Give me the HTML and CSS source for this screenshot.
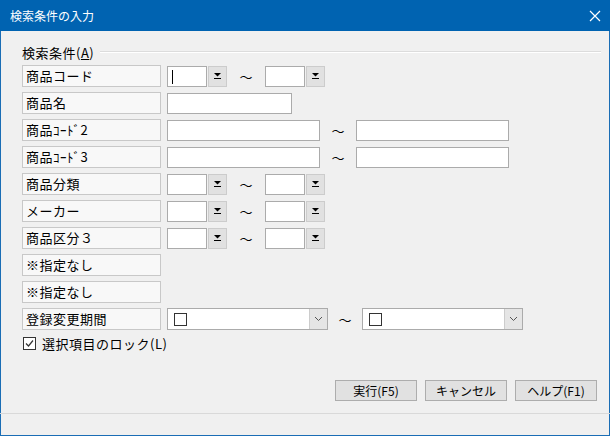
FILE: index.html
```html
<html>
<head>
  <meta charset="utf-8">
  <link rel="stylesheet" href="styles.css">
</head>
<body>
<div class="window">
  <div class="titleBar">
    <span class="titleText">検索条件の入力</span>
    <svg class="closeIcon" width="12" height="12" viewBox="0 0 12 12"><path d="M1 1L11 11M11 1L1 11" stroke="#fff" stroke-width="1.2" fill="none"/></svg>
  </div>

  <div class="client">
    <div class="groupHead">
      <span class="groupText">検索条件(<u>A</u>)</span>
      <span class="groupLine"></span>
    </div>

    <div class="rows">
      <div class="row">
        <div class="fieldLabel">商品コード</div>
        <div class="codeBox"><span class="caret"></span></div>
        <div class="dropBtn"><svg width="9" height="8" viewBox="0 0 9 8"><path d="M1 1H8L4.5 4.5Z" fill="#000"/><path d="M1 6.5H8" stroke="#000" stroke-width="1"/></svg></div>
        <span class="tilde">～</span>
        <div class="codeBox"></div>
        <div class="dropBtn"><svg width="9" height="8" viewBox="0 0 9 8"><path d="M1 1H8L4.5 4.5Z" fill="#000"/><path d="M1 6.5H8" stroke="#000" stroke-width="1"/></svg></div>
      </div>

      <div class="row">
        <div class="fieldLabel">商品名</div>
        <div class="textBox nameBox"></div>
      </div>

      <div class="row">
        <div class="fieldLabel">商品ｺｰﾄﾞ2</div>
        <div class="textBox wideBox"></div>
        <span class="tilde wideTilde">～</span>
        <div class="textBox wideBox"></div>
      </div>

      <div class="row">
        <div class="fieldLabel">商品ｺｰﾄﾞ3</div>
        <div class="textBox wideBox"></div>
        <span class="tilde wideTilde">～</span>
        <div class="textBox wideBox"></div>
      </div>

      <div class="row">
        <div class="fieldLabel">商品分類</div>
        <div class="codeBox"></div>
        <div class="dropBtn"><svg width="9" height="8" viewBox="0 0 9 8"><path d="M1 1H8L4.5 4.5Z" fill="#000"/><path d="M1 6.5H8" stroke="#000" stroke-width="1"/></svg></div>
        <span class="tilde">～</span>
        <div class="codeBox"></div>
        <div class="dropBtn"><svg width="9" height="8" viewBox="0 0 9 8"><path d="M1 1H8L4.5 4.5Z" fill="#000"/><path d="M1 6.5H8" stroke="#000" stroke-width="1"/></svg></div>
      </div>

      <div class="row">
        <div class="fieldLabel">メーカー</div>
        <div class="codeBox"></div>
        <div class="dropBtn"><svg width="9" height="8" viewBox="0 0 9 8"><path d="M1 1H8L4.5 4.5Z" fill="#000"/><path d="M1 6.5H8" stroke="#000" stroke-width="1"/></svg></div>
        <span class="tilde">～</span>
        <div class="codeBox"></div>
        <div class="dropBtn"><svg width="9" height="8" viewBox="0 0 9 8"><path d="M1 1H8L4.5 4.5Z" fill="#000"/><path d="M1 6.5H8" stroke="#000" stroke-width="1"/></svg></div>
      </div>

      <div class="row">
        <div class="fieldLabel">商品区分３</div>
        <div class="codeBox"></div>
        <div class="dropBtn"><svg width="9" height="8" viewBox="0 0 9 8"><path d="M1 1H8L4.5 4.5Z" fill="#000"/><path d="M1 6.5H8" stroke="#000" stroke-width="1"/></svg></div>
        <span class="tilde">～</span>
        <div class="codeBox"></div>
        <div class="dropBtn"><svg width="9" height="8" viewBox="0 0 9 8"><path d="M1 1H8L4.5 4.5Z" fill="#000"/><path d="M1 6.5H8" stroke="#000" stroke-width="1"/></svg></div>
      </div>

      <div class="row">
        <div class="fieldLabel">※指定なし</div>
      </div>

      <div class="row">
        <div class="fieldLabel">※指定なし</div>
      </div>

      <div class="row">
        <div class="fieldLabel">登録変更期間</div>
        <div class="dateBox">
          <span class="dateCheck"></span>
          <span class="dateBtn"><svg width="9" height="6" viewBox="0 0 9 6"><path d="M1 1L4.5 4.5L8 1" stroke="#555" stroke-width="1" fill="none"/></svg></span>
        </div>
        <span class="tilde dateTilde">～</span>
        <div class="dateBox">
          <span class="dateCheck"></span>
          <span class="dateBtn"><svg width="9" height="6" viewBox="0 0 9 6"><path d="M1 1L4.5 4.5L8 1" stroke="#555" stroke-width="1" fill="none"/></svg></span>
        </div>
      </div>
    </div>

    <div class="lockRow">
      <span class="checkBox"><svg width="11" height="11" viewBox="0 0 11 11"><path d="M2 5.5L4.5 8L9 2.5" stroke="#333" stroke-width="1.2" fill="none"/></svg></span>
      <span class="lockText">選択項目のロック(L)</span>
    </div>

    <div class="buttonRow">
      <div class="cmdButton">実行(F5)</div>
      <div class="cmdButton">キャンセル</div>
      <div class="cmdButton">ヘルプ(F1)</div>
    </div>
  </div>

  <div class="statusArea"></div>
</div>
</body>
</html>
```

FILE: styles.css
```css
body {margin:0;background:#F0F0F0;font-family:"Noto Sans CJK JP","Noto Sans",sans-serif;}

.window {width:610px;height:436px;box-sizing:border-box;border:1px solid #1A6DB5;border-top:none;background:#F0F0F0;display:flex;flex-direction:column;}

.titleBar {height:31px;background:#0063B1;margin:0 -1px;display:flex;align-items:center;justify-content:space-between;padding:0 9px 0 10px;}
.titleText {color:#fff;font-size:12px;}

.client {flex:1;padding:12px 0 0 21px;}

.groupHead {display:flex;align-items:center;height:18px;}
.groupText {font-size:13px;color:#000;padding-right:6px;letter-spacing:0.5px;}
.groupLine {flex:1;height:0;border-top:1px solid #DCDCDC;border-bottom:1px solid #FFFFFF;margin-right:8px;}

.rows {display:flex;flex-direction:column;gap:5px;margin-top:4px;}
.row {display:flex;align-items:center;height:22px;}

.fieldLabel {width:139px;height:22px;box-sizing:border-box;border:1px solid #C8C8C8;background:#F8F8F8;font-size:13px;line-height:20px;padding-left:3px;color:#000;margin-right:6px;letter-spacing:0.5px;}

.codeBox {width:40px;height:21px;box-sizing:border-box;border:1px solid #ABABAB;background:#fff;position:relative;}
.caret {position:absolute;left:4px;top:3px;width:1px;height:14px;background:#000;}
.dropBtn {width:19px;height:21px;box-sizing:border-box;border:1px solid #CCCCCC;background:#E1E1E1;display:flex;align-items:center;justify-content:center;margin-left:1px;}

.tilde {font-size:13px;color:#000;width:38px;text-align:center;}
.wideTilde {width:36px;}
.dateTilde {width:34px;}

.textBox {height:21px;box-sizing:border-box;border:1px solid #ABABAB;background:#fff;}
.nameBox {width:125px;}
.wideBox {width:153px;}

.dateBox {width:161px;height:22px;box-sizing:border-box;border:1px solid #ABABAB;background:#fff;display:flex;align-items:center;justify-content:space-between;}
.dateCheck {width:11px;height:11px;border:1px solid #333;margin-left:6px;}
.dateBtn {width:17px;height:20px;background:#E5E5E5;border-left:1px solid #CCCCCC;display:flex;align-items:center;justify-content:center;}

.lockRow {display:flex;align-items:center;height:17px;margin-top:5px;}
.checkBox {width:11px;height:11px;border:1px solid #333;background:#fff;display:flex;align-items:center;justify-content:center;margin-left:1px;}
.lockText {font-size:13px;margin-left:6px;letter-spacing:0.5px;}

.buttonRow {display:flex;justify-content:flex-end;gap:8px;margin-top:28px;padding-right:12px;}
.cmdButton {width:82px;height:21px;box-sizing:border-box;border:1px solid #ADADAD;background:#E1E1E1;font-size:12px;line-height:19px;text-align:center;color:#000;}

.statusArea {height:21px;border-top:1px solid #D9D9D9;margin:0 -1px;}
```
